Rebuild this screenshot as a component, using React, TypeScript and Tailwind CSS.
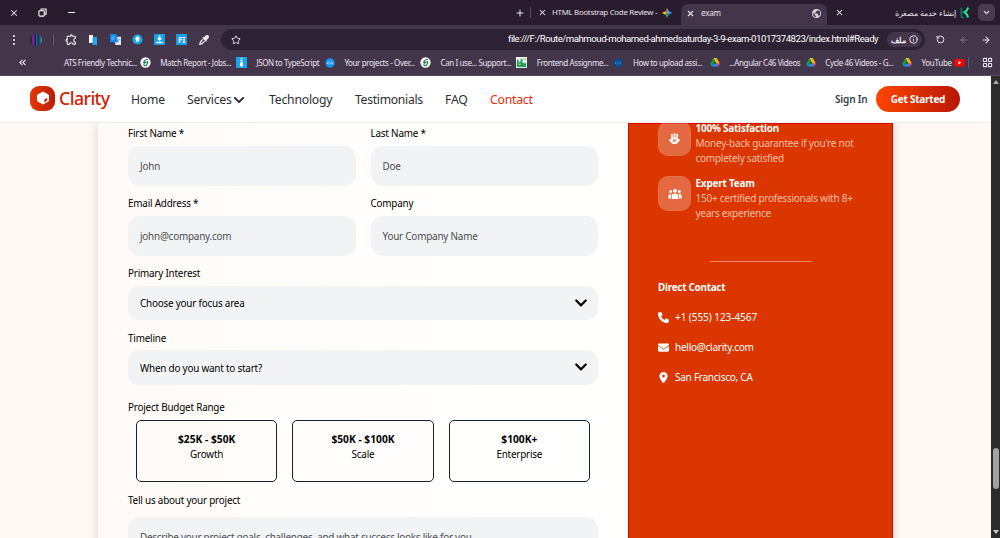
import type { ReactNode } from "react";
import { FaChevronDown } from "react-icons/fa";
import { FaEnvelope, FaEyeDropper, FaHamsa, FaLocationDot, FaPhone } from "react-icons/fa6";
import { MdOutlineExtension, MdPublic } from "react-icons/md";
import { ArrowLeft, ArrowRight, ChevronDown, Info, LayoutGrid, Plus, RotateCcw, Star, X } from "lucide-react";

function DriveIcon() {
  return (
    <svg viewBox="0 0 24 22" className="h-[9px] w-[10px]">
      <path d="M8 0h8l8 14h-8z" fill="#fbbc04" />
      <path d="M8 0l4 7-8 14-4-7z" fill="#0f9d58" />
      <path d="M8 14h16l-4 7H4z" fill="#2684fc" />
      <path d="M20 14h4l-4 7-4-7z" fill="#ea4335" />
    </svg>
  );
}

function LeafIcon() {
  return (
    <svg viewBox="0 0 12 12" className="size-[11px]">
      <circle cx="6" cy="6" r="5.6" fill="#fff" />
      <path d="M8.800 2.500Q4.500 3 3.800 6.500M8.500 4.500Q8 9.500 5.800 9.500T4.500 7.200t3-1.400" fill="none" stroke="#137047" strokeWidth="1.200" />
    </svg>
  );
}

function ZipIcon() {
  return (
    <svg viewBox="0 0 12 12" className="size-[11px]">
      <rect width="12" height="12" fill="#1ba5e8" />
      <path d="M5 1h2v1.500H5zM4.500 3.500h3L7 5H5zM5 5.500h2L8 9l-2 2-2-2z" fill="#fff" />
    </svg>
  );
}

function DotsIcon({ fill, stroke }: { fill: string; stroke: string }) {
  return (
    <svg viewBox="0 0 12 12" className="size-[10px]">
      <circle cx="6" cy="6" r="5.600" fill={fill} />
      <path d="M4.200 4.200L2.400 6l1.800 1.800M7.800 4.200L9.600 6 7.800 7.800M4 6h4" fill="none" stroke={stroke} strokeWidth="1" />
    </svg>
  );
}

function SheetIcon() {
  return (
    <svg viewBox="0 0 12 12" className="size-[11px]">
      <rect width="12" height="12" fill="#f4f4ee" />
      <path d="M1 3h2v3l2-1V2h2v4l2 1 2-1v5H1z" fill="#16a35a" />
      <path d="M8 1h3v3H8z" fill="#b7d9b5" />
      <path d="M3 7h2v2H3z" fill="#e9a39b" />
    </svg>
  );
}

function TubeIcon() {
  return (
    <svg viewBox="0 0 12 9" className="h-[8px] w-[11px]">
      <rect width="12" height="8.500" rx="2" fill="#f00" />
      <path d="M4.800 2.300v4L8 4.300z" fill="#fff" />
    </svg>
  );
}

function TeamIcon() {
  return (
    <svg viewBox="0 0 14 12" className="h-[12px] w-[14px]" fill="#fff">
      <circle cx="7" cy="2.700" r="1.900" />
      <circle cx="2.700" cy="3.600" r="1.500" />
      <circle cx="11.300" cy="3.600" r="1.500" />
      <path d="M3.700 11V7.800Q3.700 5.400 7 5.400t3.300 2.400V11z" />
      <path d="M.4 10.500V8q0-2.200 2.600-2.200Q3 7 3 10.500zM13.600 10.500V8q0-2.200-2.600-2.200V10.500z" />
    </svg>
  );
}

const bookmarks: { text: string; slot: string; icon: ReactNode }[] = [
  { text: "ATS Friendly Technic...", slot: "w-[96.200px]", icon: <LeafIcon /> },
  { text: "Match Report - Jobs...", slot: "w-[96.200px]", icon: <ZipIcon /> },
  { text: "JSON to TypeScript", slot: "w-[88px]", icon: <DotsIcon fill="#1593f5" stroke="#bfe3ff" /> },
  { text: "Your projects - Over...", slot: "w-[96.200px]", icon: <LeafIcon /> },
  { text: "Can I use... Support...", slot: "w-[96.200px]", icon: <SheetIcon /> },
  { text: "Frontend Assignme...", slot: "w-[96.200px]", icon: <DotsIcon fill="#0b4a85" stroke="#3b8ad0" /> },
  { text: "How to upload assi...", slot: "w-[96.200px]", icon: <DriveIcon /> },
  { text: "...Angular C46 Videos", slot: "w-[96.200px]", icon: <DriveIcon /> },
  { text: "Cycle 46 Videos - G...", slot: "w-[96.200px]", icon: <DriveIcon /> },
];

function TabStrip() {
  return (
    <div className="flex h-[25px] shrink-0 items-center bg-[#281c2e] text-[7.900px] text-[#e9e2ec]">
      <div className="flex w-[515px] shrink-0 items-center pl-[9px]">
        <X size={10} strokeWidth={2.500} />
        <svg viewBox="0 0 10 10" className="ml-[19px] size-[9px]" fill="none" stroke="#fff" strokeWidth="1.200">
          <rect x="1" y="3" width="6" height="6" rx="1" />
          <path d="M3.500 3V1.200H9V7H7" />
        </svg>
        <div className="ml-[21px] h-px w-[7px] bg-white" />
      </div>
      <Plus size={10} strokeWidth={2.500} />
      <div className="ml-[5px] h-[11px] w-px bg-[#57495d]" />
      <X size={9} strokeWidth={2.800} className="ml-[7px]" />
      <span className="ml-[5px] w-[110px] whitespace-nowrap tracking-[-0.300px]">HTML Bootstrap Code Review -</span>
      <svg viewBox="0 0 12 12" className="size-[10px]">
        <path d="M6 0l2 4-2 2-2-2z" fill="#ea4335" />
        <path d="M0 6l4-2 2 2-2 2z" fill="#fbbc04" />
        <path d="M6 12L4 8l2-2 2 2z" fill="#34a853" />
        <path d="M12 6L8 8 6 6l2-2z" fill="#4285f4" />
        <path d="M6 0l2.200 3.800L12 6 6 6z" fill="#4aa4ff" />
      </svg>
      <div className="mt-[4px] ml-[9px] flex h-[21px] w-[146px] shrink-0 items-center rounded-t-[7px] bg-[#44364a] pb-[3px] pl-[5px]">
        <X size={9} strokeWidth={3} />
        <span className="ml-[6px] w-[110px] text-[8px] tracking-[-0.200px]">exam</span>
        <MdPublic size={11} color="#d5d0d8" />
      </div>
      <X size={9} strokeWidth={2.800} className="ml-[8px]" />
      <span dir="rtl" className="ml-[50px] w-[62px] text-[7.700px] leading-[12px] whitespace-nowrap">إنشاء خدمة مصغرة</span>
      <svg viewBox="0 0 10 12" className="ml-[4px] h-[12px] w-[9px] shrink-0" fill="none">
        <path d="M1.500 0v9q0 2 2.500 2" stroke="#087a65" strokeWidth="1.800" />
        <path d="M9 0Q8 4 5 5q3 2 4 6" stroke="#20e79a" strokeWidth="2.200" />
      </svg>
      <div className="ml-[9px] flex size-[17px] shrink-0 items-center justify-center rounded-[5px] bg-[#4a3c50]">
        <ChevronDown size={9} strokeWidth={3} />
      </div>
    </div>
  );
}

function AddressBar() {
  return (
    <div className="flex h-[29px] items-center text-[#f1ebf3]">
      <div className="flex w-[221px] shrink-0 items-center pl-[13px]">
        <div className="flex flex-col gap-[2px]">
          <i className="size-[2px] rounded-full bg-white" />
          <i className="size-[2px] rounded-full bg-white" />
          <i className="size-[2px] rounded-full bg-white" />
        </div>
        <div className="ml-[15px] size-[12px] rounded-full bg-[linear-gradient(90deg,#31213c_15%,#8b27b5_25%,#24172e_45%,#1d62b0_55%,#17303d_70%,#31a7a2)]" />
        <div className="ml-[11px] h-[12px] w-px bg-[#65586b]" />
        <MdOutlineExtension size={13} className="ml-[10px] -scale-x-100" />
        <svg viewBox="0 0 8 10" className="ml-[12px] h-[10px] w-[8px]">
          <path d="M0 0h4v8H0z" fill="#fff" />
          <path d="M3.500 2H8v8H3.500z" fill="#20a5ed" />
        </svg>
        <svg viewBox="0 0 12 12" className="ml-[13px] size-[11px]">
          <path d="M4 3h8v9H6z" fill="#dfe7ee" />
          <path d="M0 0h7l2 9H0z" fill="#1687e8" />
          <path d="M5.500 3H3.500a1.500 1.500 0 1 0 1.500 2H4M8 6h3M9.500 6q0 2-1.500 3" fill="none" stroke="#6cbdf8" />
        </svg>
        <svg viewBox="0 0 12 12" className="ml-[11px] size-[11px]">
          <circle cx="6" cy="6" r="5.500" fill="#1ba6e8" />
          <path d="M6 2l2.500 3L7 8.500H5L3.500 5z" fill="#fff" />
        </svg>
        <svg viewBox="0 0 12 12" className="ml-[11px] size-[11px]">
          <path d="M0 0h12v12H0z" fill="#159fe8" />
          <path d="M5 1.500h2v3h2L6 7.500 3 4.500h2zM2.500 8.500h7V10h-7z" fill="#fff" />
        </svg>
        <div className="ml-[11px] flex size-[11px] items-center justify-center bg-[#159fe8] text-[8px] leading-none font-bold tracking-[-0.200px]">FI</div>
        <FaEyeDropper size={10} className="ml-[12px]" />
      </div>
      <div className="flex h-[21px] w-[704px] shrink-0 items-center rounded-full bg-[#2c2233] pl-[10px]">
        <Star size={10} strokeWidth={2.200} />
        <span className="ml-auto w-[375px] font-[Roboto,sans-serif] text-[9.600px] tracking-[-0.460px] whitespace-nowrap text-white">file:///F:/Route/mahmoud-mohamed-ahmedsaturday-3-9-exam-01017374823/index.html#Ready</span>
        <div className="mr-[3px] ml-[4px] flex h-[15px] w-[35px] shrink-0 items-center justify-center gap-[3px] rounded-full bg-[#44364a] text-[8px] leading-[13px] font-bold">
          <span dir="rtl">ملف</span>
          <Info size={9} strokeWidth={2.500} />
        </div>
      </div>
      <RotateCcw size={9} strokeWidth={2.500} className="ml-[11px] shrink-0" />
      <ArrowLeft size={10} strokeWidth={2.200} className="ml-[14px] shrink-0 text-[#8c8091]" />
      <ArrowRight size={10} strokeWidth={2.500} className="ml-[12px] shrink-0" />
    </div>
  );
}

function BookmarkBar() {
  return (
    <div className="flex h-[22px] items-center pb-[5px] text-[8px] text-[#e9e2ec]">
      <svg viewBox="0 0 8 8" className="ml-[19px] size-[7px]" fill="none" stroke="#e9e2ec" strokeWidth="1.300">
        <path d="M4 1L1 4l3 3M7.500 1l-3 3 3 3" />
      </svg>
      <div className="ml-[38px] flex">
        {bookmarks.map((b) => (
          <div key={b.text} className={"flex items-center justify-between pr-[9.500px] " + b.slot}>
            <span className="tracking-[-0.400px] whitespace-nowrap">{b.text}</span>
            {b.icon}
          </div>
        ))}
      </div>
      <span className="w-[32px] tracking-[-0.300px]">YouTube</span>
      <TubeIcon />
      <div className="ml-[3px] h-[11px] w-px bg-[#65586b]" />
      <LayoutGrid size={11} strokeWidth={2.300} className="ml-[13px]" />
    </div>
  );
}

function SiteHeader() {
  return (
    <header className="flex h-[47px] shrink-0 items-center border-b border-[#eeecec] bg-white pt-[2px] text-[12.200px] text-[#2b2f33]">
      <div className="mb-[4px] ml-[30px] flex w-[101px] items-center gap-[4px]">
        <div className="flex size-[25px] items-center justify-center rounded-[9px] bg-linear-to-r from-[#e53705] to-[#bd1c05]">
          <svg viewBox="0 0 14 14" className="size-[14px]">
            <path d="M7 1l5.500 3v6L7 13l-5.500-3V4z" fill="#fff" stroke="#fff" strokeLinejoin="round" />
            <path d="M8.300 8.500l2.900-1.700v3l-2.900 1.700z" fill="#d32d05" />
          </svg>
        </div>
        <span className="text-[17.800px] font-medium tracking-[-0.600px] text-[#cf2408]">Clarity</span>
      </div>
      <span className="w-[56px] tracking-[-0.200px]">Home</span>
      <span className="flex w-[82px] items-center">
        <span className="w-[46px] tracking-[-0.250px]">Services</span>
        <FaChevronDown size={12} />
      </span>
      <span className="w-[86px] tracking-[-0.200px]">Technology</span>
      <span className="w-[90px] tracking-[-0.300px]">Testimonials</span>
      <span className="w-[45px] tracking-[-0.200px]">FAQ</span>
      <span className="w-[345px] tracking-[-0.200px] text-[#ee2707]">Contact</span>
      <span className="mb-px w-[41px] text-[10px] font-semibold tracking-[-0.150px] whitespace-nowrap text-[#33414b]">Sign In</span>
      <button className="mb-[2px] h-[26px] w-[84px] rounded-full bg-linear-to-r from-[#ff4500] to-[#b91404] text-[10px] font-bold tracking-[-0.250px] text-white">Get Started</button>
    </header>
  );
}

function Label({ children }: { children: ReactNode }) {
  return <div className="h-[20px] text-[9.900px] leading-[20px] tracking-[-0.200px] text-black">{children}</div>;
}

function Field({ label, value }: { label: string; value: string }) {
  return (
    <div className="w-[227.500px]">
      <Label>{label}</Label>
      <div className="mt-[3px] flex h-[40px] items-center rounded-[12px] bg-[#f2f3f5] pt-px pl-[12px] text-[9.900px] tracking-[-0.200px] text-[#4a4d50]">{value}</div>
    </div>
  );
}

function Select({ label, value }: { label: string; value: string }) {
  return (
    <div className="mb-[7.500px]">
      <Label>{label}</Label>
      <div className="mt-[2.500px] flex h-[34.500px] items-center justify-between rounded-[11px] bg-[#f2f3f5] pr-[10px] pl-[12px] text-[9.900px] tracking-[-0.200px] text-black">
        <span className="pt-[2px]">{value}</span>
        <FaChevronDown size={14} />
      </div>
    </div>
  );
}

const budgets = [
  ["$25K - $50K", "Growth"],
  ["$50K - $100K", "Scale"],
  ["$100K+", "Enterprise"],
];

function ContactForm() {
  return (
    <div className="w-[530px] shrink-0 bg-linear-to-r from-[#fffaf7] to-[#fffffe] to-70% px-[30px]">
      <div className="mb-[7px] flex justify-between">
        <Field label="First Name *" value="John" />
        <Field label="Last Name *" value="Doe" />
      </div>
      <div className="mb-[7px] flex justify-between">
        <Field label="Email Address *" value="john@company.com" />
        <Field label="Company" value="Your Company Name" />
      </div>
      <Select label="Primary Interest" value="Choose your focus area" />
      <Select label="Timeline" value="When do you want to start?" />
      <div className="mt-[12px]">
        <Label>Project Budget Range</Label>
      </div>
      <div className="mt-[3px] flex justify-between px-[8px]">
        {budgets.map(([price, name]) => (
          <div key={name} className="h-[62px] w-[141.300px] rounded-[5px] border border-[#14212d] pt-[11px] text-center text-[9.900px] leading-[15px] tracking-[-0.200px] text-black">
            <div className="text-[10.200px] font-bold tracking-[0.020px]">{price}</div>
            <div>{name}</div>
          </div>
        ))}
      </div>
      <div className="mt-[8px]">
        <Label>Tell us about your project</Label>
      </div>
      <div className="mt-[7px] h-[80px] rounded-[12px] bg-[#f2f3f5] pt-[12.500px] pl-[12px] text-[9.900px] leading-[16px] tracking-[-0.230px] text-[#4a4d50]">Describe your project goals, challenges, and what success looks like for you...</div>
    </div>
  );
}

function Benefit({ icon, title, lines }: { icon: ReactNode; title: string; lines: string[] }) {
  return (
    <div className="flex h-[55px] gap-[4.500px]">
      <div className="flex h-[35px] w-[33px] items-center justify-center rounded-[10px] border border-white/5 bg-white/25">{icon}</div>
      <div className="text-[10px] leading-[15px] tracking-[-0.250px] whitespace-nowrap text-[#ffbda8]">
        <div className="text-[9.900px] font-bold tracking-[-0.180px] text-white">{title}</div>
        {lines.map((l) => (
          <div key={l}>{l}</div>
        ))}
      </div>
    </div>
  );
}

function Sidebar() {
  return (
    <aside className="w-[265px] shrink-0 border border-[#e00000] bg-[#db3600] pl-[29px] text-[10px] tracking-[-0.250px] text-white">
      <div className="mt-[-3px]">
        <Benefit icon={<FaHamsa size={11} />} title="100% Satisfaction" lines={["Money-back guarantee if you're not", "completely satisfied"]} />
        <Benefit icon={<TeamIcon />} title="Expert Team" lines={["150+ certified professionals with 8+", "years experience"]} />
      </div>
      <div className="mt-[30px] ml-[52px] h-px w-[102px] bg-[#ee8563]" />
      <div className="mt-[18px] h-[15px] text-[9.900px] leading-[15px] font-bold tracking-[-0.250px]">Direct Contact</div>
      <div className="mt-[7px] flex h-[30px] items-center gap-[6px]">
        <FaPhone size={11} />
        <span className="pt-px tracking-[-0.060px]">+1 (555) 123-4567</span>
      </div>
      <div className="flex h-[30px] items-center gap-[6px]">
        <FaEnvelope size={11} />
        <span className="pt-px">hello@clarity.com</span>
      </div>
      <div className="flex h-[30px] items-center gap-[6px]">
        <FaLocationDot size={11} />
        <span className="pt-px">San Francisco, CA</span>
      </div>
    </aside>
  );
}

export default function App() {
  return (
    <div className="flex h-[538px] w-[1000px] flex-col overflow-hidden font-['Noto_Sans','Noto_Sans_CJK_SC',sans-serif]">
      <TabStrip />
      <div className="h-[51px] shrink-0 border-b border-[#5a4b60] bg-[#44364a]">
        <AddressBar />
        <BookmarkBar />
      </div>
      <div className="flex min-h-0 flex-1">
        <div className="flex w-[991px] flex-col overflow-hidden">
          <SiteHeader />
          <main className="min-h-0 flex-1 overflow-hidden bg-linear-to-r from-[#fff9f5] to-[#fff8f5] pl-[98px]">
            <div className="flex h-[500px] w-[795px] shadow-[0_0_11px_rgba(0,0,0,0.16)]">
              <ContactForm />
              <Sidebar />
            </div>
          </main>
        </div>
        <div className="flex w-[9px] flex-col items-center bg-[#2b2b2b]">
          <svg viewBox="0 0 6 4" className="mt-[4px] h-[4px] w-[6px]"><path d="M0 4l3-4 3 4z" fill="#aaa" /></svg>
          <div className="mt-[364px] h-[41px] w-[6px] rounded-full bg-[#a2a2a2]" />
          <svg viewBox="0 0 6 4" className="mt-auto mb-[4px] h-[4px] w-[6px]"><path d="M0 0l3 4 3-4z" fill="#ccc" /></svg>
        </div>
      </div>
    </div>
  );
}
